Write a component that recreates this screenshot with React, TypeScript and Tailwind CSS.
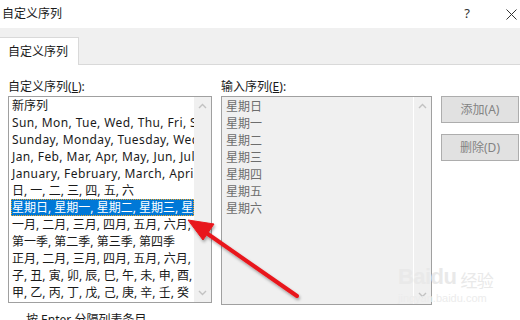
import React from "react";

const leftItems = [
  "新序列",
  "Sun, Mon, Tue, Wed, Thu, Fri, Sat",
  "Sunday, Monday, Tuesday, Wednesday, Thursday",
  "Jan, Feb, Mar, Apr, May, Jun, Jul, Aug",
  "January, February, March, April, May",
  "日, 一, 二, 三, 四, 五, 六",
  "星期日, 星期一, 星期二, 星期三, 星期四",
  "一月, 二月, 三月, 四月, 五月, 六月, 七月",
  "第一季, 第二季, 第三季, 第四季",
  "正月, 二月, 三月, 四月, 五月, 六月, 七月",
  "子, 丑, 寅, 卯, 辰, 巳, 午, 未, 申, 酉, 戌, 亥",
  "甲, 乙, 丙, 丁, 戊, 己, 庚, 辛, 壬, 癸",
];

const rightItems = ["星期日", "星期一", "星期二", "星期三", "星期四", "星期五", "星期六"];

function Chevron({ down }: { down?: boolean }) {
  return (
    <svg width="9" height="6" viewBox="0 0 9 6" className="text-[#c2c2c2]">
      <path
        d={down ? "M1 1 L4.5 4.5 L8 1" : "M1 5 L4.5 1.5 L8 5"}
        fill="none"
        stroke="currentColor"
        strokeWidth="1.4"
      />
    </svg>
  );
}

export default function App() {
  return (
    <div className="relative w-[520px] h-[320px] overflow-hidden bg-white text-[12px] text-[#1a1a1a] font-['Noto_Sans','Noto_Sans_CJK_SC',sans-serif]">
      {/* 标题栏 */}
      <div className="h-[28px] flex items-center justify-between pl-[2px] pr-[3px]">
        <span className="leading-[16px]">自定义序列</span>
        <div className="flex items-center gap-[36px] text-[#333]">
          <span className="text-[13px]">?</span>
          <svg width="11" height="11" viewBox="0 0 11 11">
            <path d="M0.5 0.5 L10.5 10.5 M10.5 0.5 L0.5 10.5" stroke="#333" strokeWidth="1" />
          </svg>
        </div>
      </div>

      {/* 选项卡 */}
      <div className="h-[37px] bg-[#f0f0f0] border-b border-[#d9d9d9] flex items-end">
        <div className="h-[28px] w-[79px] -mb-px bg-white border-t border-r border-[#d9d9d9] flex items-center pl-[8px]">
          自定义序列
        </div>
      </div>

      <div className="flex pl-[8px] pt-[14px]">
        {/* 左列 */}
        <div className="w-[204px]">
          <div className="h-[16px] leading-[16px]">
            自定义序列(<span className="underline">L</span>):
          </div>
          <div className="mt-px h-[207px] border border-[#a0a0a0] flex">
            <div className="flex-1 min-w-0 overflow-hidden pl-[2px]">
              {leftItems.map((t, i) => (
                <div
                  key={t}
                  className={
                    i === 6
                      ? "h-[17px] leading-[17px] whitespace-nowrap overflow-hidden bg-[#0078d7] text-white pl-px outline-1 outline-dotted outline-[#f5a623] -outline-offset-1"
                      : i >= 1 && i <= 4
                        ? "h-[17px] leading-[17px] whitespace-nowrap overflow-hidden pl-px tracking-[0.4px]"
                        : "h-[17px] leading-[17px] whitespace-nowrap overflow-hidden pl-px"
                  }
                >
                  {t}
                </div>
              ))}
            </div>
            <div className="w-[17px] bg-[#f0f0f0] flex flex-col items-center justify-between py-[6px]">
              <Chevron />
              <Chevron down />
            </div>
          </div>
          <div className="mt-[8px] pl-[18px] whitespace-nowrap">按 Enter 分隔列表条目。</div>
        </div>

        {/* 右列 */}
        <div className="ml-[9px] w-[211px]">
          <div className="h-[16px] leading-[16px]">
            输入序列(<span className="underline">E</span>):
          </div>
          <div className="mt-px h-[209px] border border-[#a0a0a0] bg-[#f0f0f0] flex">
            <div className="flex-1 pl-[4px] pt-px text-[#6d6d6d]">
              {rightItems.map((t) => (
                <div key={t} className="h-[17px] leading-[17px]">
                  {t}
                </div>
              ))}
            </div>
            <div className="w-[18px] border-l border-white flex flex-col items-center justify-between py-[6px]">
              <Chevron />
              <Chevron down />
            </div>
          </div>
        </div>

        {/* 按钮 */}
        <div className="ml-[9px] pt-[17px] flex flex-col gap-[11px]">
          <button className="w-[78px] h-[27px] bg-[#e1e1e1] border border-[#adadad] text-[#838383]">添加(A)</button>
          <button className="w-[78px] h-[27px] bg-[#e1e1e1] border border-[#adadad] text-[#838383]">删除(D)</button>
        </div>
      </div>

      {/* 水印 */}
      <div className="absolute left-[398px] top-[266px] text-[#e9e9e9] leading-none">
        <div className="flex items-end text-[22px] font-['Liberation_Sans'] font-bold tracking-tight">
          <span>Baidu</span>
          <span className="text-[17px] ml-[4px] font-['Noto_Sans_CJK_SC'] font-normal">经验</span>
        </div>
        <div className="text-[11px] mt-[5px] font-['Liberation_Sans'] text-[#ececec]">jingyan.baidu.com</div>
      </div>

      {/* 红色箭头 */}
      <svg className="absolute left-0 top-0" width="520" height="320">
        <defs>
          <filter id="sh" x="-20%" y="-20%" width="140%" height="140%">
            <feDropShadow dx="1" dy="2" stdDeviation="1.5" floodColor="#000" floodOpacity="0.35" />
          </filter>
        </defs>
        <g filter="url(#sh)" fill="#e8161b" stroke="#e8161b">
          <line x1="297" y1="296" x2="205" y2="232" strokeWidth="4" strokeLinecap="round" />
          <polygon points="188,220 214,224 203,240" strokeWidth="1" strokeLinejoin="round" />
        </g>
      </svg>
    </div>
  );
}
